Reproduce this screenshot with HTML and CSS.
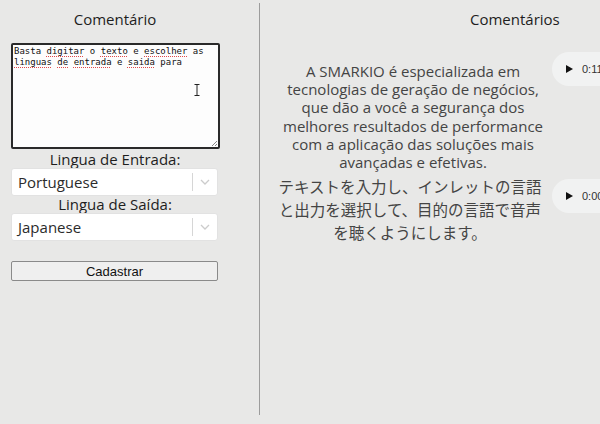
FILE: index.html
```html
<!DOCTYPE html>
<html lang="pt">
<head>
<meta charset="utf-8">
<title>Comentários</title>
<link rel="stylesheet" href="styles.css">
</head>
<body>
<div class="page">
  <section class="left">
    <div class="form">
      <h2 class="title">Comentário</h2>
      <div class="textarea" role="textbox">
        Basta <span class="sp">digitar</span> o <span class="sp">texto</span> e <span class="sp">escolher</span> as <span class="sp">linguas</span> <span class="sp">de</span> <span class="sp">entrada</span> e <span class="sp">saida</span> para
        <svg class="grip" width="8" height="8" viewBox="0 0 8 8"><path d="M7 2 L2 7 M7 5 L5 7" stroke="#888" stroke-width="1"/></svg>
        <svg class="ibeam" width="6" height="12" viewBox="0 0 6 12"><path d="M0.5 0.5 H5.5 M3 0.5 V11.5 M0.5 11.5 H5.5" stroke="#222" stroke-width="1" fill="none"/></svg>
      </div>
      <label class="label first">Lingua de Entrada:</label>
      <div class="select">
        <span class="value">Portuguese</span>
        <span class="sep"></span>
        <svg class="chev" width="10" height="6" viewBox="0 0 10 6"><path d="M1 1 L5 5 L9 1" stroke="#ccc" stroke-width="1.3" fill="none"/></svg>
      </div>
      <label class="label">Lingua de Saída:</label>
      <div class="select">
        <span class="value">Japanese</span>
        <span class="sep"></span>
        <svg class="chev" width="10" height="6" viewBox="0 0 10 6"><path d="M1 1 L5 5 L9 1" stroke="#ccc" stroke-width="1.3" fill="none"/></svg>
      </div>
      <button class="btn">Cadastrar</button>
    </div>
  </section>
  <section class="right">
    <h2 class="title rtitle">Comentários</h2>
    <div class="row row1">
      <p class="text">A SMARKIO é especializada em tecnologias de geração de negócios, que dão a você a segurança dos melhores resultados de performance com a aplicação das soluções mais avançadas e efetivas.</p>
      <div class="audio"><span class="play"></span><span class="time">0:11</span></div>
    </div>
    <div class="row row2">
      <p class="text jp">テキストを入力し、インレットの言語と出力を選択して、目的の言語で音声を聴くようにします。</p>
      <div class="audio"><span class="play"></span><span class="time">0:00</span></div>
    </div>
  </section>
</div>
</body>
</html>
```

FILE: styles.css
```css
html, body {
  margin: 0;
  padding: 0;
  background: #e8e8e7;
  overflow: hidden;
}
body {
  width: 600px;
  height: 424px;
  font-family: "Open Sans", "Noto Sans", sans-serif;
  color: #222;
}
.page {
  display: flex;
  align-items: flex-start;
}
.left {
  width: 259px;
  height: 412px;
  margin-top: 3px;
  border-right: 1px solid #9c9c9c;
}
.form {
  width: 230px;
  display: flex;
  flex-direction: column;
  align-items: center;
}
.title {
  margin: 0;
  font-size: 15px;
  font-weight: normal;
  line-height: 20px;
  color: #1e1e1e;
}
.left .title {
  margin-top: 6px;
}
.textarea {
  position: relative;
  align-self: flex-start;
  margin: 14px 0 0 11px;
  width: 204px;
  height: 101px;
  background: #fdfdfd;
  border: 2px solid #2a2a2a;
  border-radius: 2px;
  font-family: "DejaVu Sans Mono", monospace;
  font-size: 9px;
  line-height: 10.5px;
  padding: 1px 0 0 1px;
  color: #111;
}
.sp {
  text-decoration: underline dotted #e04a4a;
  text-decoration-thickness: 1px;
  text-underline-offset: 2px;
}
.grip {
  position: absolute;
  right: 0;
  bottom: 0;
}
.ibeam {
  position: absolute;
  left: 181px;
  top: 39px;
}
.label {
  font-size: 15px;
  line-height: 17px;
  color: #1e1e1e;
}
.label.first {
  margin-top: 2px;
}
.select {
  align-self: flex-start;
  margin-left: 11px;
  width: 207px;
  height: 28px;
  box-sizing: border-box;
  background: #fff;
  border: 1px solid #e2e2e2;
  border-radius: 3px;
  display: flex;
  align-items: center;
}
.value {
  flex: 1;
  padding-left: 6px;
  font-size: 15px;
  color: #2b2b2b;
}
.sep {
  width: 1px;
  height: 18px;
  background: #d6d6d6;
}
.chev {
  margin: 0 7px 0 7px;
}
.btn {
  align-self: flex-start;
  margin-left: 11px;
  margin-top: 20px;
  width: 207px;
  height: 20px;
  padding: 0;
  background: #efefef;
  border: 1px solid #8a8a8a;
  border-radius: 2px;
  font-family: "Liberation Sans", Arial, sans-serif;
  font-size: 13px;
  color: #111;
}
.right {
  flex: 1;
  padding-left: 20px;
  overflow: hidden;
}
.rtitle {
  margin-top: 9px;
  margin-left: 190px;
}
.row {
  display: flex;
  align-items: flex-start;
}
.row1 {
  margin-top: 23px;
}
.row2 {
  margin-top: 4px;
}
.text {
  width: 266px;
  flex: none;
  margin: 0;
  text-align: center;
  font-size: 15px;
  line-height: 18.2px;
  color: #444;
}
.row1 .text {
  margin-top: 10px;
}
.jp {
  font-family: "Noto Sans CJK JP", sans-serif;
  font-size: 15.5px;
  line-height: 23px;
  margin-left: -3px;
  margin-right: 3px;
}
.audio {
  flex: none;
  margin-left: 6px;
  width: 120px;
  height: 34px;
  border-radius: 17px;
  background: #f1f2f2;
  display: flex;
  align-items: center;
}
.row2 .audio {
  margin-top: 4px;
}
.play {
  margin-left: 14px;
  width: 0;
  height: 0;
  border-left: 7px solid #111;
  border-top: 4.5px solid transparent;
  border-bottom: 4.5px solid transparent;
}
.time {
  margin-left: 9px;
  font-family: "Liberation Sans", Arial, sans-serif;
  font-size: 11px;
  color: #333;
}
```
